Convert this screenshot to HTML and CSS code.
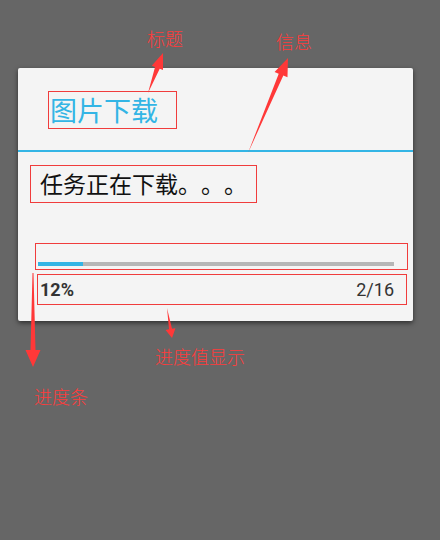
FILE: index.html
```html
<!DOCTYPE html>
<html lang="zh-CN">
<head>
  <meta charset="UTF-8">
  <title>图片下载</title>
  <link rel="stylesheet" href="styles.css">
</head>
<body>
  <div class="dialog">
    <div class="dialog-head">
      <div class="title mark">图片下载</div>
    </div>
    <div class="dialog-body">
      <div class="message mark">任务正在下载。。。</div>
      <div class="progress mark">
        <div class="track"><div class="fill" style="width: 12.5%"></div></div>
      </div>
      <div class="values mark">
        <span class="pct">12%</span>
        <span class="count">2/16</span>
      </div>
    </div>
  </div>

  <!-- annotations -->
  <svg class="arrows" width="440" height="540" viewBox="0 0 440 540">
    <polygon points="148,93 159.72,68.86 163,70.09 163,53 151.76,65.87 155.04,67.1"/>
    <polygon points="248,153 283.32,75.57 287.47,77.32 288,58 274.57,71.88 278.72,73.63"/>
    <polygon points="32.5,273 33.5,273 35.5,350 40.5,350 33,367 25.5,350 30.5,350"/>
    <polygon points="167,308 172,328.87 175.45,328.3 172,338 165.59,329.94 169.04,329.37"/>
  </svg>
  <span class="note note-title">标题</span>
  <span class="note note-info">信息</span>
  <span class="note note-bar">进度条</span>
  <span class="note note-value">进度值显示</span>
</body>
</html>
```

FILE: styles.css
```css
body {
  margin: 0;
  width: 440px;
  height: 540px;
  background-color: #666666;
  font-family: "Noto Sans CJK SC", "Noto Sans", sans-serif;
  position: relative;
  overflow: hidden;
}
.dialog {
  margin: 68px 0 0 18px;
  width: 395px;
  height: 253px;
  background-color: #f4f4f4;
  border-radius: 2px;
  box-shadow: 0 2px 5px rgba(0, 0, 0, 0.55);
}
.dialog-head {
  height: 84px;
  box-sizing: border-box;
  padding: 23px 0 0 30px;
  border-bottom: 2px solid #33b5e5;
}
.mark {
  border: 1px solid #f03c3c;
  box-sizing: border-box;
}
.title {
  width: 129px;
  height: 38px;
  padding-left: 1px;
  font-size: 27px;
  line-height: 36px;
  color: #33b5e5;
}
.dialog-body {
  display: flex;
  flex-direction: column;
}
.message {
  margin: 13px 0 0 12px;
  width: 227px;
  height: 38px;
  padding-left: 9px;
  font-size: 23px;
  line-height: 34px;
  color: #111111;
  text-spacing-trim: space-all;
}
.progress {
  margin: 40px 0 0 17px;
  width: 373px;
  height: 27px;
  padding: 18px 0 0 2px;
}
.track {
  width: 356px;
  height: 4px;
  background-color: #b6b6b6;
}
.fill {
  height: 100%;
  background-color: #33b5e5;
}
.values {
  margin: 4px 0 0 19px;
  width: 370px;
  height: 31px;
  padding: 0 12px 0 2px;
  display: flex;
  justify-content: space-between;
  align-items: center;
  font-family: Roboto, "Noto Sans", sans-serif;
  font-size: 18px;
  color: #333333;
}
.pct {
  font-weight: bold;
}
.arrows {
  position: absolute;
  left: 0;
  top: 0;
  pointer-events: none;
  fill: #ff3838;
}
.note {
  position: absolute;
  font-size: 18px;
  line-height: 18px;
  color: #ff3c3c;
  font-weight: 300;
}
.note-title { left: 147px; top: 29px; }
.note-info { left: 276px; top: 32px; }
.note-bar { left: 34px; top: 387px; }
.note-value { left: 155px; top: 347px; }
```
